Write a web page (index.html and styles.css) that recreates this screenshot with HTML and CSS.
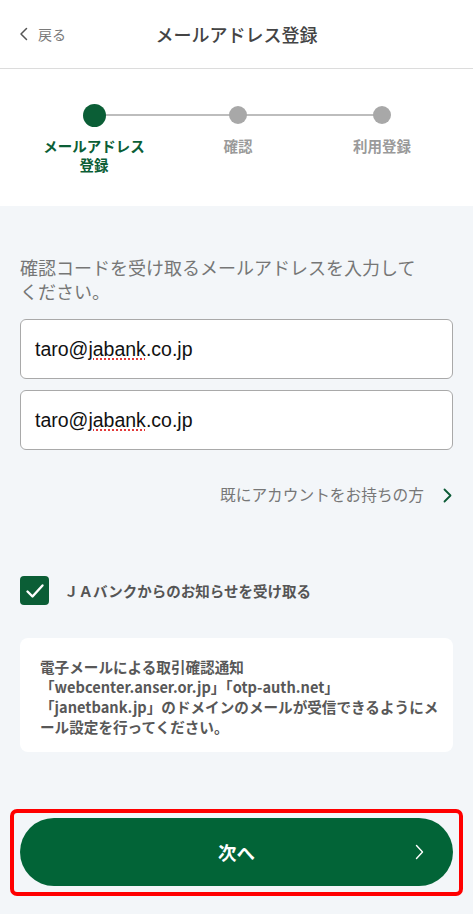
FILE: index.html
```html
<!DOCTYPE html>
<html lang="ja">
<head>
<meta charset="utf-8">
<title>メールアドレス登録</title>
<link rel="stylesheet" href="styles.css">
</head>
<body>
<div class="page">
  <header class="header">
    <div class="back">
      <svg class="back-icon" width="10" height="14" viewBox="0 0 10 14"><path d="M7.5 1.5 L2 7 L7.5 12.5" fill="none" stroke="#555" stroke-width="1.5" stroke-linecap="round" stroke-linejoin="round"/></svg>
      <span>戻る</span>
    </div>
    <h1 class="title">メールアドレス登録</h1>
    <div></div>
  </header>

  <section class="stepper">
    <div class="step active">
      <div class="dot-row"><span class="dot"></span></div>
      <div class="step-label">メールアドレス<br>登録</div>
    </div>
    <div class="step">
      <div class="dot-row"><span class="dot"></span></div>
      <div class="step-label">確認</div>
    </div>
    <div class="step last">
      <div class="dot-row"><span class="dot"></span></div>
      <div class="step-label">利用登録</div>
    </div>
  </section>

  <main class="main">
    <p class="lead">確認コードを受け取るメールアドレスを入力して<br>ください。</p>
    <div class="fields">
      <div class="field">taro@<span class="spell">jabank</span>.co.jp</div>
      <div class="field">taro@<span class="spell">jabank</span>.co.jp</div>
    </div>
    <div class="link-row">
      <span>既にアカウントをお持ちの方</span>
      <svg width="9" height="15" viewBox="0 0 9 15"><path d="M1.5 1.5 L7.5 7.5 L1.5 13.5" fill="none" stroke="#0b5a36" stroke-width="1.8" stroke-linecap="round" stroke-linejoin="round"/></svg>
    </div>
    <div class="check-row">
      <span class="checkbox">
        <svg width="20" height="16" viewBox="0 0 20 16"><path d="M2.5 8.5 L7.5 13.5 L17.5 2.5" fill="none" stroke="#fff" stroke-width="2.4" stroke-linecap="round" stroke-linejoin="round"/></svg>
      </span>
      <span class="check-label">ＪＡバンクからのお知らせを受け取る</span>
    </div>
    <div class="notice">電子メールによる取引確認通知<br>「webcenter.anser.or.jp」「otp-auth.net」<br>「janetbank.jp」のドメインのメールが受信できるようにメ<br>ール設定を行ってください。</div>
    <div class="highlight">
      <button class="next-btn" type="button">
        <span>次へ</span>
        <svg class="next-icon" width="9" height="16" viewBox="0 0 9 16"><path d="M1.5 1.5 L7.5 8 L1.5 14.5" fill="none" stroke="#fff" stroke-width="1.4" stroke-linecap="round" stroke-linejoin="round"/></svg>
      </button>
    </div>
  </main>
</div>
</body>
</html>
```

FILE: styles.css
```css
* { box-sizing: border-box; }
html, body {
  margin: 0;
  padding: 0;
}
body {
  font-family: "Noto Sans CJK JP", "Noto Sans", sans-serif;
  background: #f3f6f9;
  color: #333;
}
.page {
  width: 473px;
  min-height: 914px;
  background: #f3f6f9;
}
.header {
  height: 69px;
  background: #fff;
  border-bottom: 1px solid #dcdcdc;
  display: grid;
  grid-template-columns: 110px 1fr 110px;
  align-items: center;
}
.back {
  display: flex;
  align-items: center;
  gap: 9px;
  padding-left: 19px;
  font-size: 14px;
  color: #7a7a7a;
}
.back-icon { display: block; }
.title {
  margin: 0;
  text-align: center;
  font-size: 18px;
  font-weight: 500;
  color: #444;
  letter-spacing: 0;
}
.stepper {
  background: #fff;
  height: 137px;
  display: grid;
  grid-template-columns: repeat(3, 144px);
  padding: 34px 19px 0 22px;
}
.step {
  position: relative;
  display: flex;
  flex-direction: column;
  align-items: center;
}
.step::after {
  content: "";
  position: absolute;
  top: 11px;
  left: 72px;
  width: 144px;
  height: 2px;
  background: #bdbdbd;
}
.step.last::after { display: none; }
.dot-row {
  height: 24px;
  display: flex;
  align-items: center;
  justify-content: center;
  position: relative;
  z-index: 1;
}
.dot {
  width: 18px;
  height: 18px;
  border-radius: 50%;
  background: #a8a8a8;
}
.step.active .dot {
  width: 23px;
  height: 23px;
  background: #0b5e36;
}
.step-label {
  margin-top: 9px;
  font-size: 14.5px;
  line-height: 19px;
  font-weight: 700;
  color: #9a9a9a;
  text-align: center;
}
.step.active .step-label { color: #0b5e36; }
.main {
  padding: 50px 20px 0;
}
.lead {
  margin: 0;
  font-size: 18px;
  line-height: 23.5px;
  color: #767676;
}
.fields {
  margin-top: 16px;
  display: flex;
  flex-direction: column;
  gap: 11px;
}
.field {
  height: 60px;
  background: #fff;
  border: 1px solid #a9a9a9;
  border-radius: 6px;
  padding: 0 14px;
  display: flex;
  align-items: center;
  font-family: "Liberation Sans", Arial, sans-serif;
  font-size: 19.5px;
  color: #111;
}
.spell {
  text-decoration: underline dotted #e23a3a;
  text-decoration-thickness: 2px;
  text-underline-offset: 3px;
}
.link-row {
  margin-top: 33px;
  display: flex;
  justify-content: flex-end;
  align-items: center;
  gap: 19px;
  padding-right: 1px;
  font-size: 15.7px;
  line-height: 24px;
  color: #777;
}
.link-row svg { display: block; }
.check-row {
  margin-top: 69px;
  display: flex;
  align-items: center;
  gap: 15px;
}
.checkbox {
  width: 29px;
  height: 29px;
  border-radius: 4px;
  background: #0b5e36;
  display: flex;
  align-items: center;
  justify-content: center;
}
.check-label {
  font-size: 14.5px;
  font-weight: 700;
  color: #555;
}
.notice {
  margin-top: 33px;
  background: #fff;
  border-radius: 8px;
  padding: 19px 8px 15px 20px;
  font-size: 14.6px;
  line-height: 20px;
  font-weight: 700;
  color: #585858;
  white-space: nowrap;
}
.highlight {
  margin: 57px -10px 0;
  border: 4px solid #ff0000;
  border-radius: 7px;
  padding: 5px 6px 6px;
}
.next-btn {
  position: relative;
  width: 100%;
  height: 68px;
  border: none;
  border-radius: 34px;
  background: #026437;
  color: #fff;
  font-family: "Noto Sans CJK JP", sans-serif;
  font-size: 18.5px;
  font-weight: 700;
  display: flex;
  align-items: center;
  justify-content: center;
}
.next-icon {
  position: absolute;
  right: 29px;
  top: 26px;
}
```
